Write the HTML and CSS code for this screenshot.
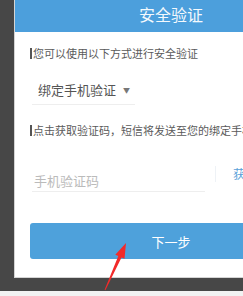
FILE: index.html
```html
<!DOCTYPE html>
<html lang="zh-CN">

<head>
    <meta charset="UTF-8">
    <meta name="viewport" content="width=device-width, initial-scale=1.0">
    <title>安全验证</title>
    <link rel="stylesheet" href="styles.css">
</head>

<body>
    <div class="screen">
        <!-- Verification Card -->
        <div class="card">
            <div class="card-header">安全验证</div>
            <div class="card-body">
                <p class="tip">您可以使用以下方式进行安全验证</p>
                <div class="select">绑定手机验证<span class="caret">▼</span></div>
                <p class="tip">点击获取验证码，短信将发送至您的绑定手机</p>
                <div class="code-row">
                    <div class="code-input">手机验证码</div>
                    <div class="code-btn">获取验证码</div>
                </div>
                <button class="next">下一步</button>
            </div>
        </div>

        <!-- Red pointer arrow -->
        <svg class="arrow" width="243" height="296" viewBox="0 0 243 296">
            <polygon points="126,243 124.5,258.7 121.5,257.4 105.4,290.2 104.6,289.8 118.3,256 115.3,254.7" fill="#f22a2a" />
        </svg>
    </div>
    <div class="bottom-strip"></div>
</body>

</html>
```

FILE: styles.css
```css
/* Base Styles */
body, html {
    margin: 0;
    padding: 0;
    font-family: "Noto Sans CJK SC", "Noto Sans", sans-serif;
    background-color: #f2f2f2;
}

body {
    width: 243px;
    height: 296px;
    overflow: hidden;
}

.screen {
    position: relative;
    background-color: #474747;
    padding: 0 0 13px 14px;
    overflow: hidden;
}

/* Card */
.card {
    width: 312px;
    background-color: #fff;
    border: 1px solid #d4d4d4;
    border-top: none;
}

.card-header {
    background-color: #4c9fdc;
    color: #f4f9fd;
    font-size: 16px;
    line-height: 29px;
    padding-bottom: 3px;
    text-align: center;
}

.card-body {
    padding: 14px 15px 18px 15px;
}

.tip {
    margin: 0;
    font-size: 11px;
    line-height: 14px;
    color: #5a5a5a;
    white-space: nowrap;
}

.tip::before {
    content: '';
    display: inline-block;
    width: 2px;
    height: 11px;
    background-color: #555;
    margin-right: 1px;
    vertical-align: -1px;
}

.tip + .select {
    margin-top: 22px;
}

.select + .tip {
    margin-top: 18px;
}

/* Select */
.select {
    width: 97px;
    margin-left: 2px;
    padding: 0 0 6px 6px;
    font-size: 13px;
    line-height: 16px;
    color: #555;
    border-bottom: 1px solid #eee;
}

.caret {
    font-size: 7px;
    color: #777;
    margin-left: 7px;
    vertical-align: 2px;
}

/* Code input */
.code-row {
    display: flex;
    margin-top: 29px;
}

.code-input {
    flex: 0 0 171px;
    margin-left: 2px;
    padding: 7px 0 2px 2px;
    font-size: 13px;
    line-height: 16px;
    color: #bbb;
    border-bottom: 1px solid #eee;
}

.code-btn {
    align-self: flex-start;
    margin-left: 10px;
    padding-left: 17px;
    border-left: 1px solid #eef2f6;
    font-size: 12px;
    line-height: 16px;
    color: #5a9fd8;
    white-space: nowrap;
}

/* Next button */
.next {
    display: block;
    width: 100%;
    height: 36px;
    margin-top: 31px;
    border: none;
    border-radius: 3px;
    background-color: #4ea1db;
    color: #fff;
    font-family: inherit;
    font-size: 13px;
    padding: 0;
}

.arrow {
    position: absolute;
    top: 0;
    left: 0;
}

.bottom-strip {
    height: 5px;
    background-color: #f2f2f2;
}
```
